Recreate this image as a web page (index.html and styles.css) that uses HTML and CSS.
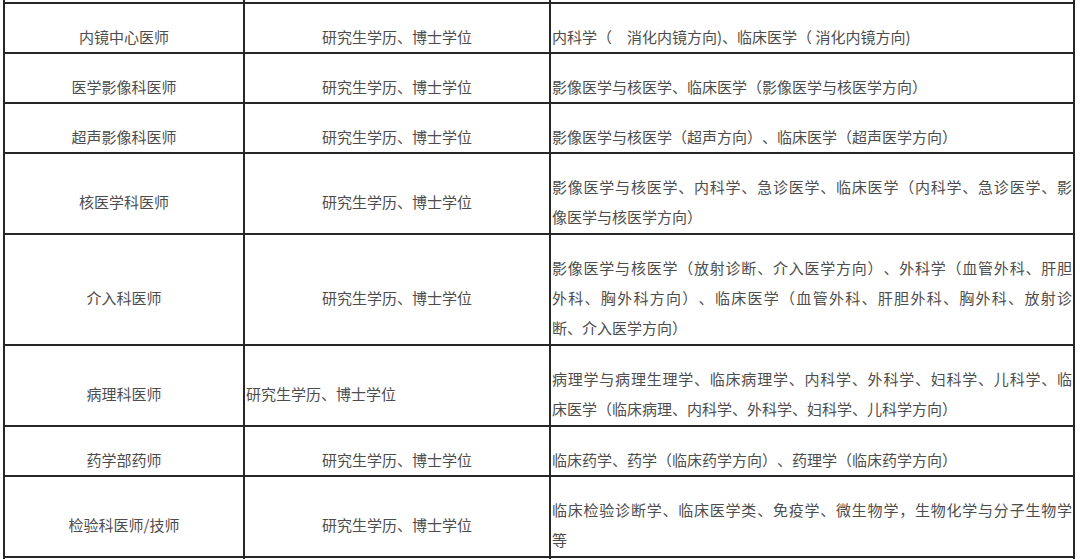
FILE: index.html
```html
<!DOCTYPE html>
<html lang="zh-CN">
<head>
<meta charset="utf-8">
<title>岗位需求表</title>
<link rel="stylesheet" href="styles.css">
</head>
<body>
<table class="sheet">
  <colgroup>
    <col class="c-post">
    <col class="c-edu">
    <col class="c-major">
  </colgroup>
  <tbody>
    <tr class="cut"><td></td><td></td><td></td></tr>
    <tr>
      <td class="post">内镜中心医师</td>
      <td class="edu">研究生学历、博士学位</td>
      <td class="major"><span class="last">内科学（　消化内镜方向)、临床医学（ 消化内镜方向)</span></td>
    </tr>
    <tr>
      <td class="post">医学影像科医师</td>
      <td class="edu">研究生学历、博士学位</td>
      <td class="major"><span class="last">影像医学与核医学、临床医学（影像医学与核医学方向）</span></td>
    </tr>
    <tr>
      <td class="post">超声影像科医师</td>
      <td class="edu">研究生学历、博士学位</td>
      <td class="major"><span class="last">影像医学与核医学（超声方向）、临床医学（超声医学方向）</span></td>
    </tr>
    <tr class="multi">
      <td class="post">核医学科医师</td>
      <td class="edu">研究生学历、博士学位</td>
      <td class="major"><span class="full">影像医学与核医学、内科学、急诊医学、临床医学（内科学、急诊医学、影</span><span class="last">像医学与核医学方向）</span></td>
    </tr>
    <tr class="multi">
      <td class="post">介入科医师</td>
      <td class="edu">研究生学历、博士学位</td>
      <td class="major"><span class="full">影像医学与核医学（放射诊断、介入医学方向）、外科学（血管外科、肝胆</span><span class="full">外科、胸外科方向）、临床医学（血管外科、肝胆外科、胸外科、放射诊</span><span class="last">断、介入医学方向）</span></td>
    </tr>
    <tr class="multi">
      <td class="post">病理科医师</td>
      <td class="edu edu-left">研究生学历、博士学位</td>
      <td class="major"><span class="full">病理学与病理生理学、临床病理学、内科学、外科学、妇科学、儿科学、临</span><span class="last">床医学（临床病理、内科学、外科学、妇科学、儿科学方向）</span></td>
    </tr>
    <tr>
      <td class="post">药学部药师</td>
      <td class="edu">研究生学历、博士学位</td>
      <td class="major"><span class="last">临床药学、药学（临床药学方向）、药理学（临床药学方向）</span></td>
    </tr>
    <tr class="multi">
      <td class="post">检验科医师/技师</td>
      <td class="edu">研究生学历、博士学位</td>
      <td class="major"><span class="full">临床检验诊断学、临床医学类、免疫学、微生物学，生物化学与分子生物学</span><span class="last">等</span></td>
    </tr>
    <tr class="cut"><td></td><td></td><td></td></tr>
  </tbody>
</table>
</body>
</html>
```

FILE: styles.css
```css
html, body {
  margin: 0;
  padding: 0;
  background: #ffffff;
}

body {
  font-family: "Noto Sans CJK SC", "Noto Sans", sans-serif;
  font-size: 15px;
  color: #4d4d4d;
  overflow: hidden;
  text-spacing-trim: space-all;
}

.sheet {
  margin-left: 3px;
  width: 1072px;
  table-layout: fixed;
  border-collapse: separate;
  border-spacing: 0;
}

.c-post { width: 242px; }
.c-edu { width: 306px; }
.c-major { width: 524px; }

.sheet td {
  box-sizing: border-box;
  border-right: 2px solid #262626;
  border-bottom: 2px solid #262626;
  padding: 18px 1px 0 1px;
  line-height: 30px;
  vertical-align: middle;
}

.sheet td:first-child {
  border-left: 2px solid #262626;
}

.sheet tr.multi td {
  padding-bottom: 1px;
}

.sheet tr.cut td {
  height: 4px;
  padding: 0;
  line-height: 0;
  font-size: 0;
}

.post {
  text-align: center;
}

.edu {
  text-align: center;
}

.edu.edu-left {
  text-align: left;
}

.major {
  text-align: left;
  padding-right: 0;
}

.major .full {
  display: block;
  text-align: justify;
  text-align-last: justify;
  white-space: nowrap;
}

.major .last {
  display: block;
  white-space: nowrap;
}
```
